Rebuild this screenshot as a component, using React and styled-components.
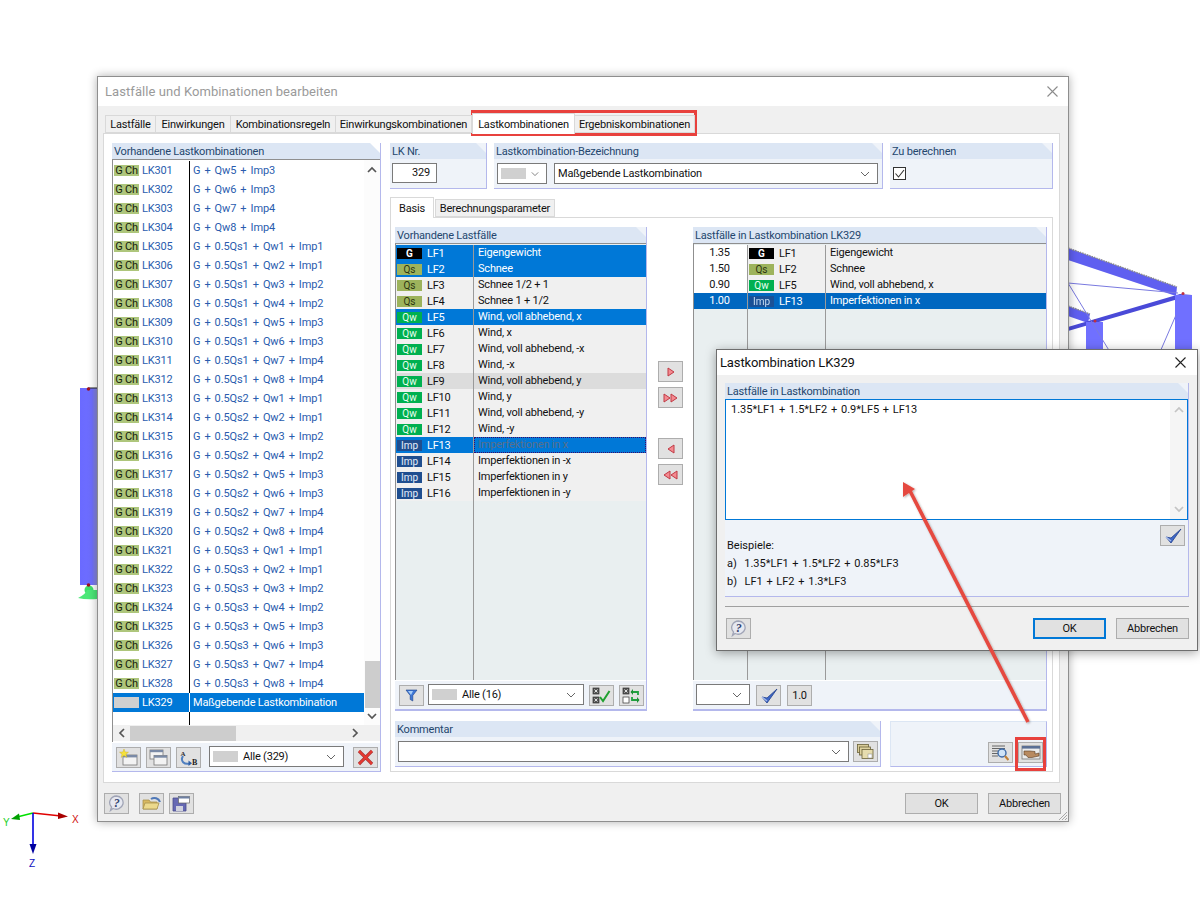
import React from 'react'
import styled, { createGlobalStyle } from 'styled-components'

const UI_FONT = 'Roboto, "Liberation Sans", Arial, sans-serif'

const GlobalStyle = createGlobalStyle`
  html, body {
    margin: 0;
    padding: 0;
    background: #fff;
  }
  body {
    font-family: ${UI_FONT};
    font-size: 11px;
    letter-spacing: -0.2px;
    color: #111;
  }
  * {
    box-sizing: border-box;
  }
`

const combos = [
  ['G + Qw5 + Imp3', 301],
  ['G + Qw6 + Imp3', 302],
  ['G + Qw7 + Imp4', 303],
  ['G + Qw8 + Imp4', 304],
]
for (let qs = 1; qs <= 3; qs++) {
  for (let qw = 1; qw <= 8; qw++) {
    const nr = 304 + (qs - 1) * 8 + qw
    combos.push([`G + 0.5Qs${qs} + Qw${qw} + Imp${Math.ceil(qw / 2)}`, nr])
  }
}

const loadCases = [
  ['G', 'LF1', 'Eigengewicht', 'sel'],
  ['Qs', 'LF2', 'Schnee', 'sel'],
  ['Qs', 'LF3', 'Schnee 1/2 + 1'],
  ['Qs', 'LF4', 'Schnee 1 + 1/2'],
  ['Qw', 'LF5', 'Wind, voll abhebend, x', 'sel'],
  ['Qw', 'LF6', 'Wind, x'],
  ['Qw', 'LF7', 'Wind, voll abhebend, -x'],
  ['Qw', 'LF8', 'Wind, -x'],
  ['Qw', 'LF9', 'Wind, voll abhebend, y', 'hover'],
  ['Qw', 'LF10', 'Wind, y'],
  ['Qw', 'LF11', 'Wind, voll abhebend, -y'],
  ['Qw', 'LF12', 'Wind, -y'],
  ['Imp', 'LF13', 'Imperfektionen in x', 'focus'],
  ['Imp', 'LF14', 'Imperfektionen in -x'],
  ['Imp', 'LF15', 'Imperfektionen in y'],
  ['Imp', 'LF16', 'Imperfektionen in -y'],
]

const picked = [
  ['1.35', 'G', 'LF1', 'Eigengewicht'],
  ['1.50', 'Qs', 'LF2', 'Schnee'],
  ['0.90', 'Qw', 'LF5', 'Wind, voll abhebend, x'],
  ['1.00', 'Imp', 'LF13', 'Imperfektionen in x', true],
]

const badgeColors = {
  G: ['#000', '#fff'],
  Qs: ['#9db35c', '#2c3312'],
  Qw: ['#00b050', '#e8fff0'],
  Imp: ['#1f4e8f', '#e6eefa'],
}

function App() {
  return (
    <>
      <GlobalStyle />
      <Desktop>
        <Scene />
        <MainWindow>
          <TitleBar>
            <MainTitle>Lastfälle und Kombinationen bearbeiten</MainTitle>
            <CloseIcon color="#8c8c8c" />
          </TitleBar>
          <WindowBody>
            <TabRow>
              <Tab $w={51}>Lastfälle</Tab>
              <Tab $w={75}>Einwirkungen</Tab>
              <Tab $w={105}>Kombinationsregeln</Tab>
              <Tab $w={136}>Einwirkungskombinationen</Tab>
              <Tab $w={103} $active>Lastkombinationen</Tab>
              <Tab $w={120}>Ergebniskombinationen</Tab>
            </TabRow>
            <TabPanel>
              <ComboPanel>
                <GroupHead>Vorhandene Lastkombinationen</GroupHead>
                <ComboFrame>
                  <ComboList>
                    {combos.map(([text, nr]) => (
                      <ComboRow key={nr}>
                        <ComboBadge>G Ch</ComboBadge>
                        <ComboNr>LK{nr}</ComboNr>
                        <ComboText>{text}</ComboText>
                      </ComboRow>
                    ))}
                    <ComboRow $selected>
                      <ComboBadge $plain />
                      <ComboNr>LK329</ComboNr>
                      <ComboText $name>Maßgebende Lastkombination</ComboText>
                    </ComboRow>
                    <ComboFiller>
                      <span />
                    </ComboFiller>
                  </ComboList>
                  <VScroll>
                    <Chevron dir="up" />
                    <VThumb />
                    <Chevron dir="down" />
                  </VScroll>
                  <HScroll>
                    <ArrowGlyph dir="left" />
                    <HThumb />
                    <ArrowGlyph dir="right" />
                  </HScroll>
                  <ScrollCorner />
                </ComboFrame>
                <Toolbar $pad={4}>
                  <ToolButton><NewIcon /></ToolButton>
                  <ToolButton><CopyIcon /></ToolButton>
                  <ToolButton><RenumberIcon /></ToolButton>
                  <Combo $w={135} $left={3} $up>
                    <Swatch />
                    <ComboLabel>Alle (329)</ComboLabel>
                    <Chevron dir="down" color="#666" thin />
                  </Combo>
                  <ToolButton $left={4}><DeleteIcon /></ToolButton>
                </Toolbar>
              </ComboPanel>

              <RightColumn>
                <TopGroups>
                  <Group $w={97}>
                    <GroupHead>LK Nr.</GroupHead>
                    <TopBody $pad={2}>
                      <NumberBox>329</NumberBox>
                    </TopBody>
                  </Group>
                  <Group $w={389}>
                    <GroupHead>Lastkombination-Bezeichnung</GroupHead>
                    <TopBody $pad={3}>
                      <Combo $w={50}>
                        <Swatch $w={25} />
                        <Chevron dir="down" color="#666" thin />
                      </Combo>
                      <Combo $w={324} $left={7}>
                        <ComboLabel>Maßgebende Lastkombination</ComboLabel>
                        <Chevron dir="down" color="#666" thin />
                      </Combo>
                    </TopBody>
                  </Group>
                  <Group $w={163}>
                    <GroupHead>Zu berechnen</GroupHead>
                    <TopBody $pad={3}>
                      <CheckBox>
                        <svg width="11" height="11" viewBox="0 0 11 11">
                          <path d="M1.5 5.5 L4.5 9 L10 2" fill="none" stroke="#333" strokeWidth="1.1" />
                        </svg>
                      </CheckBox>
                    </TopBody>
                  </Group>
                </TopGroups>

                <SubTabRow>
                  <SubTab $w={44} $active>Basis</SubTab>
                  <SubTab $w={120}>Berechnungsparameter</SubTab>
                </SubTabRow>
                <SubPanel>
                  <UpperRow>
                    <Group $w={252}>
                      <GroupHead>Vorhandene Lastfälle</GroupHead>
                      <CaseList>
                        {loadCases.map(([type, nr, name, state]) => (
                          <CaseRow key={nr} $state={state}>
                            <CaseKey>
                              <TypeBadge $type={type} $state={state}>{type}</TypeBadge>
                              <span>{nr}</span>
                            </CaseKey>
                            <CaseName $state={state}>{name}</CaseName>
                          </CaseRow>
                        ))}
                        <CaseFiller>
                          <div />
                          <div />
                        </CaseFiller>
                      </CaseList>
                      <Toolbar $pad={4}>
                        <ToolButton><FunnelIcon /></ToolButton>
                        <Combo $w={156} $left={-1} $up>
                          <Swatch />
                          <ComboLabel>Alle (16)</ComboLabel>
                          <Chevron dir="down" color="#666" thin />
                        </Combo>
                        <ToolButton><CheckListIcon /></ToolButton>
                        <ToolButton><SwapListIcon /></ToolButton>
                      </Toolbar>
                    </Group>

                    <MoveColumn>
                      <ToolButton><MoveIcon dir="right" /></ToolButton>
                      <ToolButton><MoveIcon dir="right" double /></ToolButton>
                      <ToolButton $gapTop={25}><MoveIcon dir="left" /></ToolButton>
                      <ToolButton><MoveIcon dir="left" double /></ToolButton>
                    </MoveColumn>

                    <Group $w={354}>
                      <GroupHead>Lastfälle in Lastkombination LK329</GroupHead>
                      <PickedList>
                        {picked.map(([factor, type, nr, name, selected]) => (
                          <PickedRow key={nr} $selected={selected}>
                            <FactorCell>{factor}</FactorCell>
                            <PickedKey>
                              <TypeBadge $type={type} $dim={selected}>{type}</TypeBadge>
                              <span>{nr}</span>
                            </PickedKey>
                            <PickedName>{name}</PickedName>
                          </PickedRow>
                        ))}
                        <PickedFiller>
                          <div />
                          <div />
                          <div />
                        </PickedFiller>
                      </PickedList>
                      <Toolbar $pad={3}>
                        <Combo $w={54} $up>
                          <Chevron dir="down" color="#666" thin />
                        </Combo>
                        <ToolButton $left={1}><BlueCheckIcon /></ToolButton>
                        <ToolButton $left={1}>1.0</ToolButton>
                      </Toolbar>
                    </Group>
                  </UpperRow>

                  <LowerRow>
                    <Group $w={486}>
                      <GroupHead>Kommentar</GroupHead>
                      <CommentBody>
                        <Combo $w={451}>
                          <ComboLabel />
                          <Chevron dir="down" color="#666" thin />
                        </Combo>
                        <ToolButton><StackIcon /></ToolButton>
                      </CommentBody>
                    </Group>
                    <ActionBox>
                      <ToolButton><ZoomListIcon /></ToolButton>
                      <ToolButton><HandIcon /></ToolButton>
                    </ActionBox>
                  </LowerRow>
                </SubPanel>
              </RightColumn>
            </TabPanel>
            <WindowFooter>
              <ToolButton><HelpIcon /></ToolButton>
              <ToolButton $left={5}><FolderIcon /></ToolButton>
              <ToolButton><SaveIcon /></ToolButton>
              <FooterSpace />
              <TextButton>OK</TextButton>
              <TextButton>Abbrechen</TextButton>
            </WindowFooter>
          </WindowBody>
          <ResizeGrip viewBox="0 0 11 11">
            <path d="M10 2 L2 10 M10 5 L5 10 M10 8 L8 10" stroke="#a8a8a8" strokeWidth="1" />
          </ResizeGrip>
        </MainWindow>

        <FormulaDialog>
          <DialogTitleBar>
            <DialogTitle>Lastkombination LK329</DialogTitle>
            <CloseIcon color="#222" />
          </DialogTitleBar>
          <DialogBody>
            <FormulaGroup>
              <GroupHead>Lastfälle in Lastkombination</GroupHead>
              <FormulaBox>
                <FormulaText>1.35*LF1 + 1.5*LF2 + 0.9*LF5 + LF13</FormulaText>
                <FormulaScroll>
                  <Chevron dir="up" color="#c4c4c4" />
                  <Chevron dir="down" color="#c4c4c4" />
                </FormulaScroll>
              </FormulaBox>
              <FormulaLower>
                <Examples>
                  <div>Beispiele:</div>
                  <div>a)&nbsp; 1.35*LF1 + 1.5*LF2 + 0.85*LF3</div>
                  <div>b)&nbsp; LF1 + LF2 + 1.3*LF3</div>
                </Examples>
                <ToolButton><BlueCheckIcon /></ToolButton>
              </FormulaLower>
            </FormulaGroup>
            <Divider />
            <DialogFooter>
              <ToolButton><HelpIcon /></ToolButton>
              <FooterSpace />
              <TextButton $primary>OK</TextButton>
              <TextButton>Abbrechen</TextButton>
            </DialogFooter>
          </DialogBody>
        </FormulaDialog>

        <Callouts />
      </Desktop>
    </>
  )
}

function Scene() {
  return (
    <SceneSvg viewBox="0 0 1200 900">
      <defs>
        <linearGradient id="col" x1="0" x2="1" y1="0" y2="0">
          <stop offset="0" stopColor="#6a6aff" />
          <stop offset="0.7" stopColor="#6e6eff" />
          <stop offset="1" stopColor="#8a8ad8" />
        </linearGradient>
      </defs>
      <rect x="80" y="388" width="17" height="197" fill="url(#col)" />
      <path d="M88 388 H97" stroke="#222" strokeWidth="1" />
      <circle cx="88.5" cy="389" r="1.8" fill="#a01020" />
      <circle cx="89" cy="590" r="4.5" fill="#3fe06a" />
      <path d="M78 598 Q86 594 87 590 H97 V599 Q86 600 78 598Z" fill="#4ce878" />
      <circle cx="88.5" cy="585" r="1.8" fill="#a01020" />

      <path d="M33 813 L61 816" stroke="#e00000" strokeWidth="1.6" />
      <path d="M58 812.5 L68 816.5 L58 819Z" fill="#a80000" />
      <path d="M33 813 L17 817" stroke="#00e000" strokeWidth="1.6" />
      <path d="M19 813.5 L11 819 L20 820Z" fill="#00a000" />
      <path d="M33 813 V846" stroke="#0000e0" strokeWidth="1.6" />
      <path d="M29.5 844 H36.5 L33 854Z" fill="#0000a0" />
      <AxisLabel x="72" y="823" fill="#d01010">X</AxisLabel>
      <AxisLabel x="3" y="826" fill="#20d020">Y</AxisLabel>
      <AxisLabel x="29" y="867" fill="#1010c0">Z</AxisLabel>

      <path d="M1068 248 L1177 287 L1176 296 L1068 260Z" fill="#5f5ff0" />
      <path d="M1068 248 L1177 287" stroke="#8a8a8a" strokeWidth="1.5" strokeDasharray="1.5 1" />
      <path d="M1068 306 L1090 314 L1088 323 L1068 316Z" fill="#5f5ff0" />
      <path d="M1068 306 L1090 314" stroke="#8a8a8a" strokeWidth="1.5" strokeDasharray="1.5 1" />
      <path d="M1068 327 L1180 294 L1192 295 L1068 331Z" fill="#4a4ad8" />
      <rect x="1175" y="295" width="17" height="60" fill="#7070ff" />
      <rect x="1086" y="322" width="17" height="33" fill="#7070ff" />
      <path d="M1068 283 L1178 293 M1068 283 L1110 352 M1176 315 L1160 352" stroke="#7a7ae0" strokeWidth="1" fill="none" />
      <circle cx="1095" cy="321" r="1.5" fill="#c03040" />
      <circle cx="1183" cy="293.5" r="1.5" fill="#c03040" />
    </SceneSvg>
  )
}

function Callouts() {
  return (
    <>
      <TabHighlight />
      <ButtonHighlight />
      <ArrowSvg viewBox="0 0 1200 900">
        <defs>
          <filter id="soft" x="-20%" y="-20%" width="140%" height="140%">
            <feDropShadow dx="1" dy="1" stdDeviation="1.2" floodColor="#000" floodOpacity="0.3" />
          </filter>
        </defs>
        <g filter="url(#soft)">
          <path d="M1028 722 L908 487" stroke="#e5493f" strokeWidth="3.6" />
          <path d="M903 482 L915 489 L903 497Z" fill="#e5493f" />
        </g>
      </ArrowSvg>
    </>
  )
}

function CloseIcon({ color }) {
  return (
    <svg width="11" height="11" viewBox="0 0 11 11">
      <path d="M0.5 0.5 L10.5 10.5 M10.5 0.5 L0.5 10.5" stroke={color} strokeWidth="1.1" />
    </svg>
  )
}

function Chevron({ dir, color = '#555', thin }) {
  const d = dir === 'up' ? 'M1 6 L5 2 L9 6' : 'M1 2 L5 6 L9 2'
  return (
    <svg width="10" height="8" viewBox="0 0 10 8">
      <path d={d} fill="none" stroke={color} strokeWidth={thin ? 1 : 1.7} />
    </svg>
  )
}

function ArrowGlyph({ dir }) {
  const d = dir === 'left' ? 'M6 1 L2 5 L6 9' : 'M2 1 L6 5 L2 9'
  return (
    <svg width="8" height="10" viewBox="0 0 8 10">
      <path d={d} fill="none" stroke="#555" strokeWidth="1.7" />
    </svg>
  )
}

function MoveIcon({ dir, double }) {
  const one = dir === 'right' ? 'M1 1 L7 5 L1 9Z' : 'M7 1 L1 5 L7 9Z'
  const w = double ? 15 : 8
  return (
    <svg width={w} height="10" viewBox={`0 0 ${w} 10`}>
      <path d={one} fill="#f48a90" stroke="#c03a45" strokeWidth="1" />
      {double && <path d={one} transform="translate(7 0)" fill="#f48a90" stroke="#c03a45" strokeWidth="1" />}
    </svg>
  )
}

function HelpIcon() {
  return (
    <svg width="17" height="17" viewBox="0 0 17 17">
      <path d="M8.5 1 A7 6.6 0 1 1 5 13.5 L2.5 15.5 L3.5 12 A7 6.6 0 0 1 8.5 1Z" fill="#e6e8f0" stroke="#a0a4b6" strokeWidth="1.3" />
      <text x="8.7" y="12" textAnchor="middle" fontFamily="Liberation Serif, serif" fontSize="12" fontWeight="700" fontStyle="italic" fill="#32406e">?</text>
    </svg>
  )
}

function FolderIcon() {
  return (
    <svg width="20" height="17" viewBox="0 0 20 17">
      <path d="M9 4 A6 6 0 0 1 18 7" fill="none" stroke="#4f78b8" strokeWidth="2" />
      <path d="M1 5 H7 L8.5 7 H15 V14 H1Z" fill="#d8b860" stroke="#a8924e" strokeWidth="0.8" />
      <path d="M1 14 L3 8 H17 L15 14Z" fill="#ecd98c" stroke="#a8924e" strokeWidth="0.8" />
    </svg>
  )
}

function SaveIcon() {
  return (
    <svg width="19" height="17" viewBox="0 0 19 17">
      <path d="M1 3 H13 L14 4 V16 H1Z" fill="#6669b4" stroke="#4a4d8a" strokeWidth="0.8" />
      <rect x="4" y="11" width="7" height="5" fill="#d0d2de" />
      <rect x="6.5" y="1.5" width="11" height="6.5" fill="#fff" stroke="#666" strokeWidth="0.7" />
      <rect x="6.5" y="1.5" width="11" height="2" fill="#6d7fa2" />
    </svg>
  )
}

function NewIcon() {
  return (
    <svg width="19" height="17" viewBox="0 0 19 17">
      <rect x="4" y="6" width="14" height="10" fill="#f3f3f3" stroke="#777" strokeWidth="0.8" />
      <rect x="4" y="6" width="14" height="2.4" fill="#7a8aa6" />
      <path d="M5 0 L6.2 3 L9.5 3.2 L7 5.2 L7.8 8.4 L5 6.6 L2.2 8.4 L3 5.2 L0.5 3.2 L3.8 3Z" fill="#f6e23b" stroke="#c5a820" strokeWidth="0.4" />
    </svg>
  )
}

function CopyIcon() {
  return (
    <svg width="19" height="17" viewBox="0 0 19 17">
      <rect x="1" y="1" width="13" height="9" fill="#f3f3f3" stroke="#777" strokeWidth="0.8" />
      <rect x="1" y="1" width="13" height="2.2" fill="#7a8aa6" />
      <rect x="5" y="6.5" width="13" height="9.5" fill="#f3f3f3" stroke="#777" strokeWidth="0.8" />
      <rect x="5" y="6.5" width="13" height="2.2" fill="#7a8aa6" />
    </svg>
  )
}

function RenumberIcon() {
  return (
    <svg width="21" height="18" viewBox="0 0 21 18">
      <text x="2.5" y="7" fontFamily="Liberation Serif, serif" fontSize="7" fontWeight="700" fill="#333">A</text>
      <text x="14" y="16" fontFamily="Liberation Serif, serif" fontSize="8" fontWeight="700" fill="#222">B</text>
      <path d="M5 7 C2 12 6 16 12 14.5" fill="none" stroke="#4f7fc0" strokeWidth="2" />
      <path d="M10.5 11.5 L14 14.2 L10.5 17Z" fill="#2f5fa5" />
    </svg>
  )
}

function DeleteIcon() {
  return (
    <svg width="17" height="17" viewBox="0 0 17 17">
      <path d="M2 2 L15 15 M15 2 L2 15" stroke="#a83a3a" strokeWidth="3.2" />
      <path d="M2 2 L15 15 M15 2 L2 15" stroke="#e8382f" strokeWidth="1.8" />
    </svg>
  )
}

function FunnelIcon() {
  return (
    <svg width="13" height="13" viewBox="0 0 13 13">
      <path d="M1 1 H12 L7.8 6.5 V12 L5.2 10.5 V6.5Z" fill="#3f78d8" stroke="#1d3f86" strokeWidth="0.6" />
      <path d="M3 2 H8 L6 6Z" fill="#a8ccf5" />
    </svg>
  )
}

function ChecksBoxes({ second }) {
  return (
    <>
      <rect x="1" y="1" width="6" height="6" fill="#555" stroke="#333" strokeWidth="0.7" />
      <path d="M2.5 2.5 L5.5 5.5 M5.5 2.5 L2.5 5.5" stroke="#eee" strokeWidth="0.9" />
      <rect x="1" y="10" width="6" height="6" fill={second ? '#555' : '#fff'} stroke="#333" strokeWidth="0.7" />
      {second && <path d="M2.5 11.5 L5.5 14.5 M5.5 11.5 L2.5 14.5" stroke="#eee" strokeWidth="0.9" />}
    </>
  )
}

function CheckListIcon() {
  return (
    <svg width="19" height="17" viewBox="0 0 19 17">
      <ChecksBoxes second />
      <path d="M8 10 L11 14 L17.5 4" fill="none" stroke="#20a030" strokeWidth="2" />
    </svg>
  )
}

function SwapListIcon() {
  return (
    <svg width="19" height="17" viewBox="0 0 19 17">
      <ChecksBoxes />
      <path d="M9 5 H16 V8 M17 13 H10 V10" fill="none" stroke="#20a040" strokeWidth="1.8" />
      <path d="M11 2 L8.5 5 L11 8Z M15 10 L17.5 13 L15 16Z" fill="#1f8f38" />
    </svg>
  )
}

function BlueCheckIcon() {
  return (
    <svg width="18" height="18" viewBox="0 0 18 18">
      <path d="M2 10 L7 16 L17 2 L7 11Z" fill="#3f68c8" stroke="#1f3d8c" strokeWidth="0.8" />
      <path d="M2 10 L7 14" stroke="#a8bcec" strokeWidth="1.2" />
    </svg>
  )
}

function StackIcon() {
  return (
    <svg width="17" height="15" viewBox="0 0 17 15">
      <rect x="0.5" y="0.5" width="11" height="8" fill="#d8cc98" stroke="#6a6238" strokeWidth="0.8" />
      <rect x="2.5" y="3" width="11" height="8" fill="#ded29e" stroke="#6a6238" strokeWidth="0.8" />
      <rect x="5" y="5.5" width="11" height="9" fill="#e6dcae" stroke="#6a6238" strokeWidth="0.8" />
      <rect x="11" y="10" width="4" height="4" fill="#fff" stroke="#888" strokeWidth="0.5" />
    </svg>
  )
}

function ZoomListIcon() {
  return (
    <svg width="17" height="17" viewBox="0 0 17 17">
      <path d="M0 2 H13 M0 4.5 H13 M0 7 H8 M0 9.5 H6 M0 12 H6" stroke="#666" strokeWidth="1" />
      <circle cx="10" cy="9" r="4" fill="#cfe4f8" stroke="#3d6aa8" strokeWidth="1.4" />
      <path d="M13 12 L16.5 16" stroke="#c08038" strokeWidth="2.2" />
    </svg>
  )
}

function HandIcon() {
  return (
    <svg width="20" height="15" viewBox="0 0 20 15">
      <rect x="1" y="1" width="18" height="13" fill="#ececec" stroke="#777" strokeWidth="0.8" />
      <rect x="1" y="1" width="18" height="2.6" fill="#5a6f94" />
      <path d="M3 6 H9 L14 6.5 V9 L18 8 V11 L11 12.5 H7 L5 10 H3Z" fill="#b88a60" stroke="#5a3c24" strokeWidth="0.6" />
    </svg>
  )
}

const Desktop = styled.div`
  position: relative;
  width: 1200px;
  height: 900px;
  overflow: hidden;
  background: #fff;
`

const SceneSvg = styled.svg`
  position: absolute;
  left: 0;
  top: 0;
  width: 1200px;
  height: 900px;
`

const AxisLabel = styled.text`
  font-family: "Liberation Sans", sans-serif;
  font-size: 10px;
`

const MainWindow = styled.div`
  position: absolute;
  left: 97px;
  top: 76px;
  width: 972px;
  height: 746px;
  display: flex;
  flex-direction: column;
  background: #f0f0f0;
  border: 1px solid #8e8e8e;
  box-shadow: 0 0 9px rgba(0, 0, 0, 0.32);
`

const TitleBar = styled.div`
  height: 29px;
  flex: none;
  display: flex;
  align-items: center;
  justify-content: space-between;
  padding: 0 10px 1px 7px;
  background: #fff;
`

const MainTitle = styled.div`
  font-size: 13px;
  letter-spacing: 0.07px;
  color: #9a9a9a;
`

const WindowBody = styled.div`
  flex: 1;
  min-height: 0;
  display: flex;
  flex-direction: column;
  padding: 7px 8px 0 5px;
`

const TabRow = styled.div`
  height: 20px;
  flex: none;
  display: flex;
  align-items: flex-end;
  padding-left: 2px;
  position: relative;
  z-index: 1;
`

const Tab = styled.div`
  width: ${p => p.$w}px;
  height: ${p => (p.$active ? 21 : 18)}px;
  margin-bottom: ${p => (p.$active ? -1 : 0)}px;
  display: flex;
  align-items: center;
  justify-content: center;
  white-space: nowrap;
  background: ${p => (p.$active ? '#fff' : '#f0f0f0')};
  border: 1px solid #d9d9d9;
  border-left-width: ${p => (p.$active ? 1 : 0)}px;
  border-bottom-width: ${p => (p.$active ? 0 : 1)}px;
  &:first-child {
    border-left-width: 1px;
  }
`

const TabPanel = styled.div`
  height: 650px;
  flex: none;
  display: flex;
  gap: 9px;
  padding: 9px 6px 10px 8px;
  background: #fff;
  border: 1px solid #d9d9d9;
`

const ComboPanel = styled.div`
  width: 269px;
  flex: none;
  display: flex;
  flex-direction: column;
  border-right: 1px solid #b4b8ec;
`

const GroupHead = styled.div`
  height: 16px;
  flex: none;
  display: flex;
  align-items: center;
  padding-left: 2px;
  color: #24466e;
  white-space: nowrap;
  background: #dce6f4;
  clip-path: polygon(0 0, calc(100% - 10px) 0, 100% 10px, 100% 100%, 0 100%);
`

const ComboFrame = styled.div`
  height: 583px;
  flex: none;
  display: grid;
  grid-template-columns: 1fr 16px;
  grid-template-rows: 1fr 16px;
  border-top: 1px solid #8f8f8f;
  border-left: 1px solid #8f8f8f;
  padding-bottom: 1px;
  background: #fff;
`

const ComboList = styled.div`
  display: flex;
  flex-direction: column;
  padding-top: 1px;
  min-width: 0;
`

const ComboRow = styled.div`
  height: 19px;
  flex: none;
  display: grid;
  grid-template-columns: 76px 1fr;
  align-items: stretch;
  position: relative;
  background: ${p => (p.$selected ? '#0078d7' : '#fff')};
  color: ${p => (p.$selected ? '#fff' : '#2a5cae')};
  & > span:first-child {
    background: ${p => (p.$selected ? '#d0d0d0' : '#aec67c')};
  }
  & > div:last-child {
    border-left-color: ${p => (p.$selected ? '#fff' : '#000')};
  }
`

const ComboBadge = styled.span`
  position: absolute;
  left: 1px;
  top: 4px;
  width: 25px;
  height: 11px;
  line-height: 11px;
  text-align: center;
  white-space: nowrap;
  color: #16220a;
`

const ComboNr = styled.span`
  padding-left: 29px;
  line-height: 19px;
`

const ComboText = styled.div`
  padding-left: 3px;
  line-height: 19px;
  letter-spacing: ${p => (p.$name ? -0.2 : -0.1)}px;
  word-spacing: ${p => (p.$name ? 0 : 1.4)}px;
  border-left: 1px solid #000;
  white-space: nowrap;
`

const ComboFiller = styled.div`
  flex: 1;
  padding-left: 76px;
  & > span {
    display: block;
    height: 100%;
    border-left: 1px solid #000;
  }
`

const VScroll = styled.div`
  display: flex;
  flex-direction: column;
  align-items: center;
  padding: 6px 0 5px;
  background: #fcfcfc;
  & > svg:last-child {
    margin-top: 4px;
  }
`

const VThumb = styled.div`
  width: 15px;
  height: 47px;
  margin-top: auto;
  background: #cdcdcd;
`

const HScroll = styled.div`
  display: flex;
  align-items: center;
  padding: 0 5px;
  background: #f0f0f0;
  & > svg:last-child {
    margin-left: auto;
  }
`

const HThumb = styled.div`
  width: 106px;
  height: 15px;
  margin-left: 4px;
  background: #cdcdcd;
`

const ScrollCorner = styled.div`
  background: #f0f0f0;
`

const Toolbar = styled.div`
  height: 30px;
  flex: none;
  display: flex;
  align-items: flex-start;
  gap: 5px;
  padding: 4px 0 0 ${p => p.$pad}px;
  background: #eff3f9;
  border-bottom: 1px solid #b4b8ec;
  border-top: 1px solid #fff;
`

const ToolButton = styled.div`
  width: 25px;
  height: 21px;
  flex: none;
  display: flex;
  align-items: center;
  justify-content: center;
  margin-left: ${p => p.$left || 0}px;
  margin-top: ${p => p.$gapTop || 0}px;
  background: #e1e1e1;
  border: 1px solid #adadad;
`

const Combo = styled.div`
  width: ${p => p.$w}px;
  height: 21px;
  flex: none;
  display: flex;
  align-items: center;
  gap: 5px;
  padding: 0 7px 0 3px;
  margin-left: ${p => p.$left || 0}px;
  margin-top: ${p => (p.$up ? -1 : 0)}px;
  background: #fff;
  border: 1px solid #7a7a7a;
  justify-content: flex-end;
`

const Swatch = styled.span`
  width: ${p => p.$w || 25}px;
  height: 11px;
  flex: none;
  background: #d0d0d0;
`

const ComboLabel = styled.span`
  flex: 1;
  white-space: nowrap;
  color: #111;
`

const RightColumn = styled.div`
  width: 663px;
  flex: none;
  display: flex;
  flex-direction: column;
`

const TopGroups = styled.div`
  height: 46px;
  flex: none;
  display: flex;
  gap: 7px;
`

const Group = styled.div`
  width: ${p => p.$w}px;
  flex: none;
  display: flex;
  flex-direction: column;
  background: #eff3f9;
  border-right: 1px solid #b4b8ec;
  border-bottom: 1px solid #b4b8ec;
`

const TopBody = styled.div`
  flex: 1;
  display: flex;
  align-items: flex-start;
  padding: 4px 0 0 ${p => p.$pad}px;
`

const NumberBox = styled.div`
  width: 45px;
  height: 20px;
  padding-right: 6px;
  line-height: 18px;
  text-align: right;
  background: #fff;
  border: 1px solid #7a7a7a;
`

const CheckBox = styled.div`
  width: 13px;
  height: 13px;
  margin-top: 4px;
  display: flex;
  align-items: center;
  justify-content: center;
  background: #fff;
  border: 1px solid #333;
`

const SubTabRow = styled.div`
  height: 20px;
  margin-top: 8px;
  flex: none;
  display: flex;
  align-items: flex-end;
  position: relative;
  z-index: 1;
`

const SubTab = styled.div`
  width: ${p => p.$w}px;
  height: ${p => (p.$active ? 21 : 18)}px;
  margin-bottom: ${p => (p.$active ? -1 : 0)}px;
  margin-left: ${p => (p.$active ? 0 : 1)}px;
  display: flex;
  align-items: center;
  justify-content: center;
  white-space: nowrap;
  background: ${p => (p.$active ? '#fff' : '#f0f0f0')};
  border: 1px solid #d9d9d9;
  border-bottom-width: ${p => (p.$active ? 0 : 1)}px;
`

const SubPanel = styled.div`
  height: 555px;
  flex: none;
  display: flex;
  flex-direction: column;
  gap: 10px;
  padding: 9px 5px 4px 4px;
  border: 1px solid #d9d9d9;
`

const UpperRow = styled.div`
  height: 484px;
  flex: none;
  display: flex;
`

const LowerRow = styled.div`
  height: 46px;
  flex: none;
  display: flex;
  gap: 9px;
`

const CaseList = styled.div`
  flex: 1;
  min-height: 0;
  display: flex;
  flex-direction: column;
  padding-top: 1px;
  background: #e9eff0;
  border-top: 1px solid #8f8f8f;
  border-left: 1px solid #8f8f8f;
`

const caseBg = { sel: '#0078d7', focus: '#0078d7', hover: '#dcdcdc' }

const CaseRow = styled.div`
  height: 16px;
  flex: none;
  display: grid;
  grid-template-columns: 78px 1fr;
  background: ${p => caseBg[p.$state] || '#f0f0f0'};
  color: ${p => (p.$state === 'sel' || p.$state === 'focus' ? '#fff' : '#111')};
`

const CaseKey = styled.div`
  display: flex;
  align-items: center;
  gap: 5px;
  padding-left: 1px;
  border-right: 1px solid #9a9a9a;
`

const TypeBadge = styled.span`
  width: 25px;
  height: 11px;
  flex: none;
  line-height: 11px;
  text-align: center;
  font-size: 10px;
  letter-spacing: 0;
  background: ${p => badgeColors[p.$type][0]};
  color: ${p => badgeColors[p.$type][1]};
  font-weight: ${p => (p.$type === 'G' ? 700 : 400)};
  opacity: ${p => (p.$dim ? 0.85 : 1)};
`

const CaseName = styled.div`
  padding-left: 4px;
  line-height: 15px;
  white-space: nowrap;
  color: ${p => (p.$state === 'focus' ? '#5a6f88' : 'inherit')};
  outline: ${p => (p.$state === 'focus' ? '1px dotted #3a0a6a' : 'none')};
  outline-offset: -1px;
`

const CaseFiller = styled.div`
  flex: 1;
  display: grid;
  grid-template-columns: 78px 1fr;
  & > div:first-child {
    border-right: 1px solid #9a9a9a;
  }
`

const MoveColumn = styled.div`
  width: 46px;
  flex: none;
  display: flex;
  flex-direction: column;
  gap: 5px;
  padding: 134px 0 0 11px;
`

const PickedList = styled.div`
  flex: 1;
  min-height: 0;
  display: flex;
  flex-direction: column;
  padding-top: 1px;
  background: #e9eff0;
  border-top: 1px solid #8f8f8f;
  border-left: 1px solid #8f8f8f;
`

const PickedRow = styled.div`
  height: 16px;
  flex: none;
  display: grid;
  grid-template-columns: 54px 78px 1fr;
  background: ${p => (p.$selected ? '#0067c0' : '#f0f0f0')};
  color: ${p => (p.$selected ? '#fff' : '#111')};
  & > div:first-child {
    background: ${p => (p.$selected ? '#0067c0' : '#fff')};
  }
`

const FactorCell = styled.div`
  text-align: center;
  line-height: 15px;
  padding-right: 2px;
  border-right: 1px solid #9a9a9a;
`

const PickedKey = styled.div`
  display: flex;
  align-items: center;
  gap: 5px;
  padding-left: 1px;
  border-right: 1px solid #9a9a9a;
`

const PickedName = styled.div`
  padding-left: 4px;
  line-height: 15px;
  white-space: nowrap;
`

const PickedFiller = styled.div`
  flex: 1;
  display: grid;
  grid-template-columns: 54px 78px 1fr;
  & > div:not(:last-child) {
    border-right: 1px solid #9a9a9a;
  }
`

const CommentBody = styled.div`
  flex: 1;
  display: flex;
  gap: 4px;
  padding: 4px 0 0 3px;
`

const ActionBox = styled.div`
  flex: 1;
  display: flex;
  justify-content: flex-end;
  align-items: flex-end;
  gap: 5px;
  padding: 0 3px 3px 0;
  background: #eff3f9;
  border-top: 1px solid #dce6f4;
  border-left: 1px solid #dce6f4;
  border-right: 1px solid #b4b8ec;
  border-bottom: 1px solid #b4b8ec;
`

const WindowFooter = styled.div`
  flex: 1;
  display: flex;
  gap: 5px;
  padding: 10px 0 0 1px;
  margin-right: -1px;
  align-items: flex-start;
`

const FooterSpace = styled.div`
  flex: 1;
`

const TextButton = styled.div`
  width: 73px;
  height: 21px;
  flex: none;
  margin-left: 5px;
  display: flex;
  align-items: center;
  justify-content: center;
  background: #e1e1e1;
  border: ${p => (p.$primary ? '2px solid #0078d7' : '1px solid #adadad')};
`

const ResizeGrip = styled.svg`
  position: absolute;
  right: 0;
  bottom: 0;
  width: 11px;
  height: 11px;
`

const FormulaDialog = styled.div`
  position: absolute;
  left: 716px;
  top: 349px;
  width: 482px;
  height: 302px;
  display: flex;
  flex-direction: column;
  background: #f0f0f0;
  border: 1px solid #6e6e6e;
  box-shadow: 0 2px 10px rgba(0, 0, 0, 0.35);
`

const DialogTitleBar = styled.div`
  height: 25px;
  flex: none;
  display: flex;
  align-items: center;
  justify-content: space-between;
  padding: 0 11px 0 3px;
  background: #fff;
`

const DialogTitle = styled.div`
  font-size: 13px;
  letter-spacing: -0.13px;
  color: #111;
`

const DialogBody = styled.div`
  flex: 1;
  display: flex;
  flex-direction: column;
  padding: 8px 8px 0;
`

const FormulaGroup = styled.div`
  height: 214px;
  flex: none;
  display: flex;
  flex-direction: column;
  background: #eff3f9;
  border-right: 1px solid #b4b8ec;
  border-bottom: 1px solid #b4b8ec;
`

const FormulaBox = styled.div`
  height: 121px;
  flex: none;
  display: flex;
  background: #fff;
  border: 1px solid #0078d7;
`

const FormulaText = styled.div`
  flex: 1;
  padding: 3px 5px;
  letter-spacing: 0;
  word-spacing: 1px;
  white-space: nowrap;
`

const FormulaScroll = styled.div`
  width: 17px;
  flex: none;
  display: flex;
  flex-direction: column;
  align-items: center;
  justify-content: space-between;
  padding: 6px 0;
  background: #f5f5f5;
`

const FormulaLower = styled.div`
  flex: 1;
  display: flex;
  justify-content: space-between;
  padding: 5px 3px 0 2px;
`

const Examples = styled.div`
  padding-top: 12px;
  letter-spacing: 0;
  word-spacing: 1px;
  line-height: 18px;
  white-space: nowrap;
`

const Divider = styled.div`
  height: 1px;
  flex: none;
  margin-top: 9px;
  background: #a0a0a0;
`

const DialogFooter = styled.div`
  display: flex;
  gap: 5px;
  padding: 11px 0 0 1px;
`

const TabHighlight = styled.div`
  position: absolute;
  left: 471px;
  top: 110px;
  width: 226px;
  height: 26px;
  border: 3px solid #e8413d;
  pointer-events: none;
`

const ButtonHighlight = styled.div`
  position: absolute;
  left: 1015px;
  top: 737px;
  width: 31px;
  height: 34px;
  border: 3px solid #e8413d;
  pointer-events: none;
`

const ArrowSvg = styled.svg`
  position: absolute;
  left: 0;
  top: 0;
  width: 1200px;
  height: 900px;
  pointer-events: none;
`

export default App
